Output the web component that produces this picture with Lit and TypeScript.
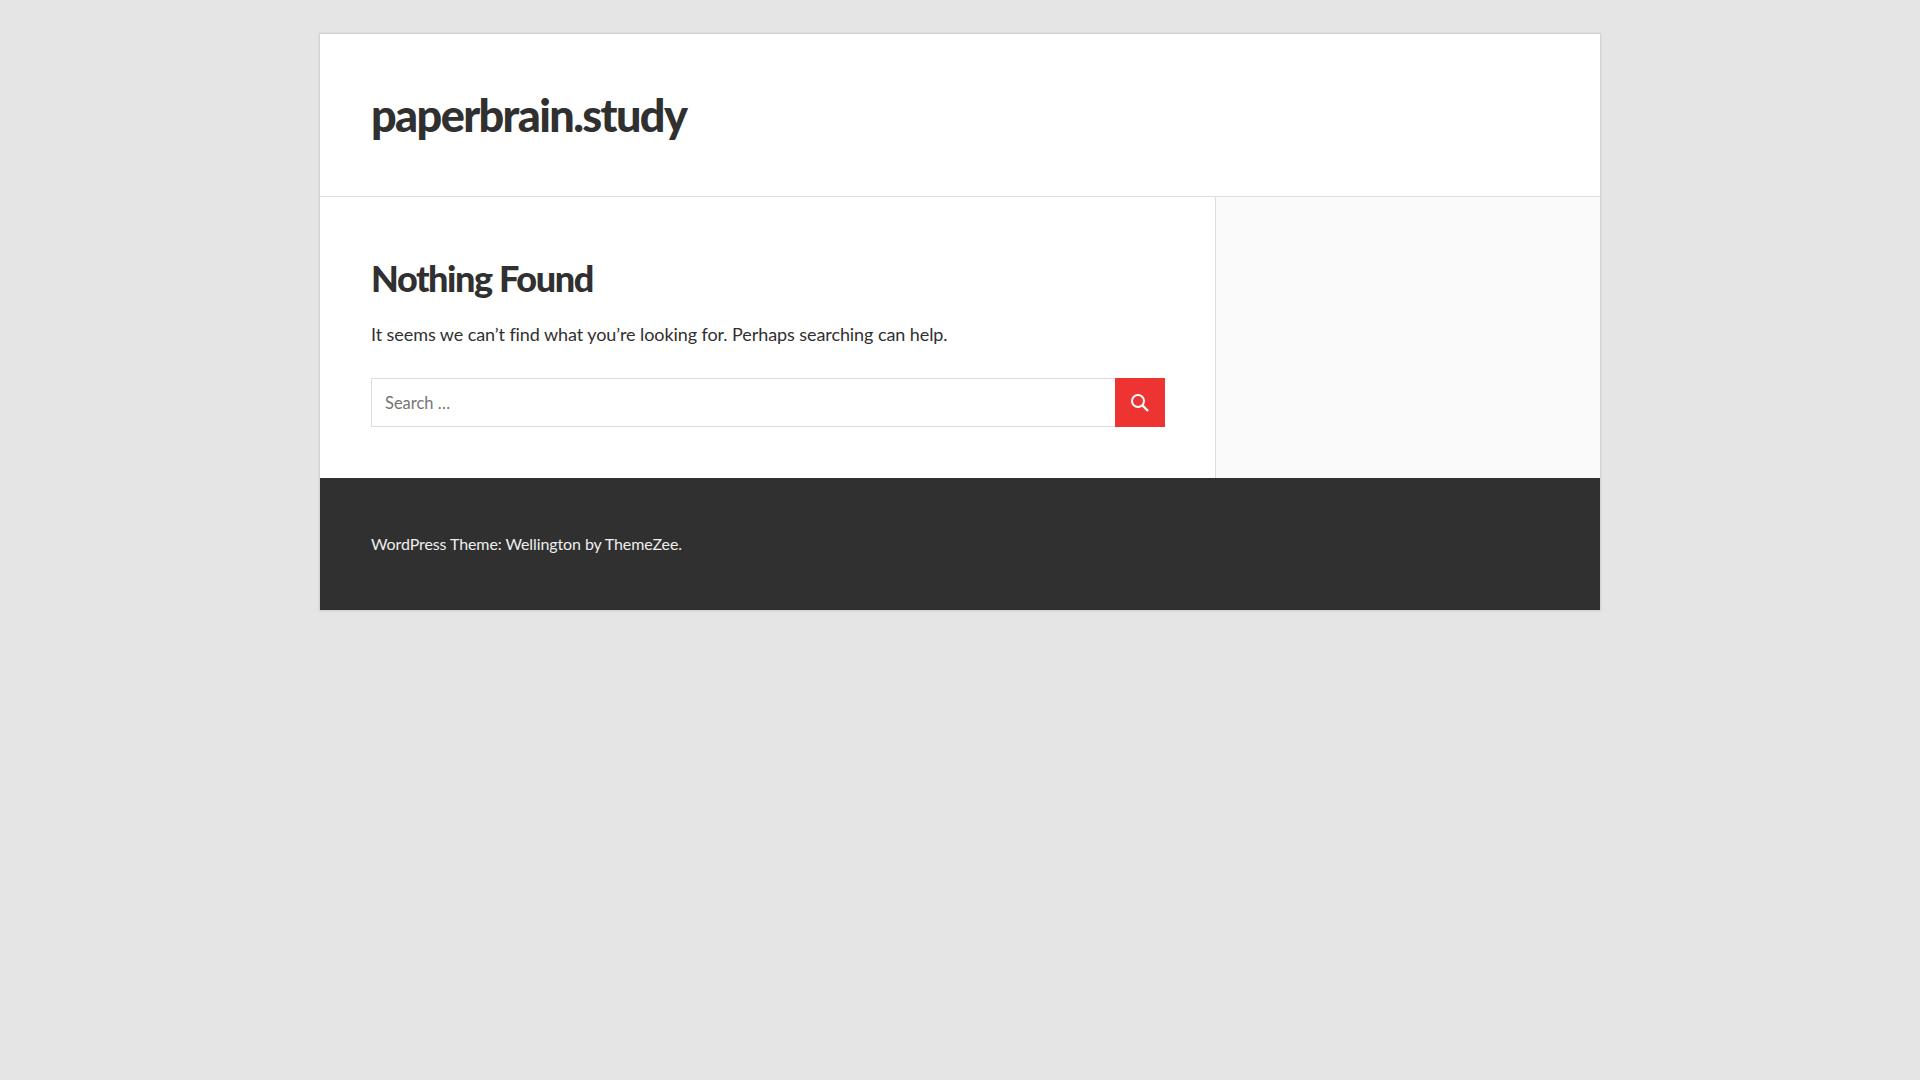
import { LitElement, html, css } from "lit";
import { customElement } from "lit/decorators.js";

@customElement("app-root")
export class AppRoot extends LitElement {
  static styles = css`
    :host {
      display: block;
      min-height: 1080px;
      background: #e5e5e5;
      font-family: "Lato", "Noto Sans", sans-serif;
      color: #303030;
      box-sizing: border-box;
      padding-top: 34px;
    }
    .wrapper {
      width: 1280px;
      margin: 0 auto;
      background: #fff;
      box-shadow: 0 0 2px 1px #ccc;
      display: flex;
      flex-direction: column;
    }
    .header {
      height: 163px;
      box-sizing: border-box;
      padding: 0 51px;
      border-bottom: 1px solid #ddd;
      display: flex;
      align-items: center;
    }
    .site-title {
      margin: 0;
      font-size: 45px;
      font-weight: 900;
      letter-spacing: -1.6px;
      line-height: 1;
    }
    .body {
      display: flex;
      height: 281px;
    }
    .content {
      width: 896px;
      box-sizing: border-box;
      padding: 61px 50px 0 51px;
      border-right: 1px solid #ddd;
      display: flex;
      flex-direction: column;
    }
    .sidebar {
      flex: 1;
      background: #fafafa;
    }
    h1 {
      margin: 0;
      font-size: 36px;
      font-weight: 900;
      line-height: 40px;
      letter-spacing: -1.4px;
    }
    p {
      margin: 25px 0 0;
      font-size: 18px;
      line-height: 22px;
      letter-spacing: -0.08px;
    }
    .search {
      display: flex;
      height: 49px;
      margin-top: 33px;
    }
    .field {
      flex: 1;
      box-sizing: border-box;
      border: 1px solid #ddd;
      border-right: none;
      padding: 0 13px;
      font-size: 16.5px;
      color: #757575;
      display: flex;
      align-items: center;
    }
    .btn {
      width: 50px;
      background: #ee3333;
      display: flex;
      align-items: center;
      justify-content: center;
    }
    .footer {
      height: 132px;
      box-sizing: border-box;
      background: #303030;
      color: #eee;
      font-size: 16px;
      letter-spacing: -0.1px;
      padding: 0 51px 2px;
      display: flex;
      align-items: center;
    }
  `;

  render() {
    return html`
      <div class="wrapper">
        <header class="header"><div class="site-title">paperbrain.study</div></header>
        <div class="body">
          <main class="content">
            <h1>Nothing Found</h1>
            <p>It seems we can’t find what you’re looking for. Perhaps searching can help.</p>
            <div class="search">
              <div class="field">Search …</div>
              <div class="btn">
                <svg width="20" height="20" viewBox="0 0 20 20" fill="none" stroke="#fff" stroke-width="2">
                  <circle cx="8" cy="8" r="6"></circle>
                  <path d="M12.5 12.5 L18 18" stroke-width="2.4"></path>
                </svg>
              </div>
            </div>
          </main>
          <aside class="sidebar"></aside>
        </div>
        <footer class="footer">WordPress Theme: Wellington by ThemeZee.</footer>
      </div>
    `;
  }
}
